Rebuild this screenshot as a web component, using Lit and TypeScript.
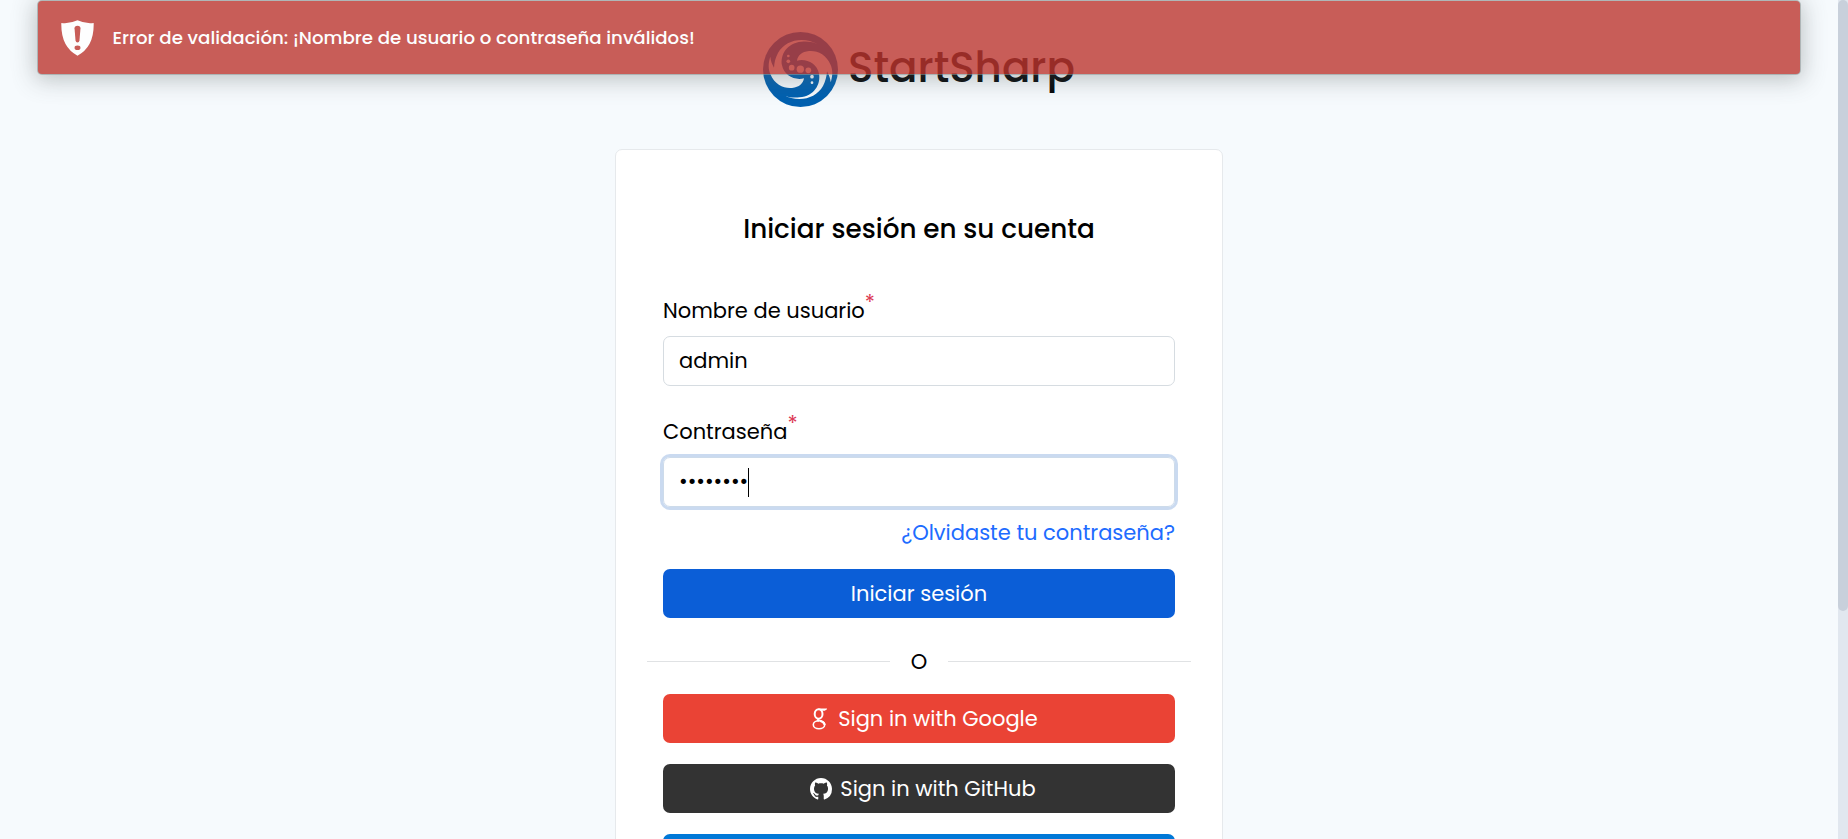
import { LitElement, html, css, svg } from "lit";
import { customElement } from "lit/decorators.js";

const swirl = "M168,49 C122,24 70,36 48,75 C40,90 37,104 36,119 C30,108 26,98 25,86 C18,107 19,124 25,138 C38,170 65,182 90,180 C112,178 124,166 126,151 C98,158 66,143 60,112 C54,80 75,45 118,41 C140,39 155,42 168,49Z";

const dots = [
  [79, 84, 4], [79, 100, 5.5], [89, 119, 8.5], [115, 123.5, 11], [139, 127, 8.5], [150, 146, 5.5], [150, 164, 4],
];

@customElement("app-root")
export class AppRoot extends LitElement {
  static styles = css`
    :host {
      display: block;
      font-family: Poppins, Inter, sans-serif;
      font-size: 21px;
      line-height: 30px;
      color: #000;
    }
    * { box-sizing: border-box; }
    .page { display: flex; height: 839px; overflow: hidden; background: #f6fafd; position: relative; }
    main { flex: 1; display: flex; flex-direction: column; align-items: center; padding-top: 32px; }
    .scroll { width: 10px; background: #e1e7ef; }
    .thumb { height: 611px; border-radius: 5px; background: #c8d0db; }
    .brand { display: flex; height: 75px; margin-bottom: 42px; gap: 10px; }
    .brand svg { width: 75px; height: 75px; }
    .brand span { font-size: 42px; font-weight: 500; line-height: 71px; white-space: nowrap; color: #06080b; }
    .card {
      flex: none; width: 608px; height: 760px; padding: 59px 47px 0; background: #fff;
      border: 1px solid #e6e9ec; border-radius: 7px; display: flex; flex-direction: column;
    }
    h1 { margin: 0 0 48px; font-size: 26.25px; font-weight: 500; line-height: 39px; text-align: center; white-space: nowrap; }
    label { display: block; margin-bottom: 10px; white-space: nowrap; }
    sup { color: #dc3a55; font-size: 21px; line-height: 0; vertical-align: 8px; }
    .input { height: 50px; border: 1px solid #d6dce1; border-radius: 7px; padding: 0 15px; display: flex; align-items: center; }
    .user { margin-bottom: 31px; }
    .focus { height: 50px; border-color: #cddbea; box-shadow: 0 0 0 3px #cadaf0; }
    .caret { width: 1px; height: 29px; background: #000; }
    .forgot { align-self: flex-end; margin: 11px 0 21px; color: #206bff; white-space: nowrap; }
    .btn {
      height: 49px; flex: none; border-radius: 7px; color: #fff;
      display: flex; align-items: center; justify-content: center; white-space: nowrap;
    }
    .primary { background: #0b5ed7; }
    .or { display: flex; align-items: center; gap: 21px; margin: 28px -16px 18px; }
    .or i { flex: 1; height: 1px; background: #e0e2e4; }
    .or span { padding-top: 2px; line-height: 28px; }
    .google { background: #ea4335; margin-bottom: 21px; padding-left: 12px; }
    .google svg { width: 15px; height: 22px; margin-right: 11px; }
    .github { background: #333; margin-bottom: 21px; padding-left: 8px; }
    .github svg { width: 22px; height: 22px; margin-right: 8px; }
    .ms { background: #0078d7; }
    .toast {
      position: absolute; left: 38px; top: 1px; width: 1762px; height: 73px; opacity: .8; border-radius: 4px;
      background: #bd362f; color: #fff; display: flex; align-items: center; padding-left: 23px; gap: 18.5px;
      box-shadow: 0 0 0 1px rgba(140,150,150,.75), 0 3px 22px 3px rgba(90,100,100,.45);
      font-size: 18.2px; font-weight: 500; white-space: nowrap;
    }
    .toast svg { width: 33px; height: 36px; }
  `;

  render() {
    return html`
      <div class="page">
        <main>
          <div class="brand">
            <svg viewBox="3 12 225 225">
              <circle cx="115.5" cy="124.5" r="112.5" fill="#0060b0"/>
              <g fill="#f6fafd">
                <path d=${swirl}/>
                <path d=${swirl} transform="rotate(180 115.5 124.5)"/>
                ${dots.map(([x, y, r]) => svg`<circle cx=${x} cy=${y} r=${r}/>`)}
              </g>
            </svg>
            <span>StartSharp</span>
          </div>
          <section class="card">
            <h1>Iniciar sesión en su cuenta</h1>
            <label>Nombre de usuario<sup>*</sup></label>
            <div class="input user">admin</div>
            <label>Contraseña<sup>*</sup></label>
            <div class="input focus"><span>••••••••</span><span class="caret"></span></div>
            <a class="forgot">¿Olvidaste tu contraseña?</a>
            <div class="btn primary">Iniciar sesión</div>
            <div class="or"><i></i><span>O</span><i></i></div>
            <div class="btn google">
              <svg viewBox="0 0 15 22" fill="none" stroke="#fff">
                <ellipse cx="6.6" cy="6" rx="3.9" ry="4.8" stroke-width="2"/>
                <path d="M6.5 1H14.2L12.6 2.1H9" stroke-width="1.2"/>
                <path d="M7.5 10.7C5.4 11.2 5.2 12.4 6.8 13.3" stroke-width="1.8"/>
                <ellipse cx="7" cy="16.8" rx="5.7" ry="4" stroke-width="1.6"/>
                <path d="M8 12.8C10.5 13.6 12.4 14.8 12.6 17" stroke-width="2.2"/>
              </svg>
              Sign in with Google
            </div>
            <div class="btn github">
              <svg viewBox="0 0 16 16" fill="#fff"><path d="M8 0C3.58 0 0 3.58 0 8c0 3.54 2.29 6.53 5.47 7.59.4.07.55-.17.55-.38 0-.19-.01-.82-.01-1.49-2.01.37-2.53-.49-2.69-.94-.09-.23-.48-.94-.82-1.13-.28-.15-.68-.52-.01-.53.63-.01 1.08.58 1.23.82.72 1.21 1.87.87 2.33.66.07-.52.28-.87.51-1.07-1.78-.2-3.64-.89-3.64-3.95 0-.87.31-1.59.82-2.15-.08-.2-.36-1.02.08-2.12 0 0 .67-.21 2.2.82.64-.18 1.32-.27 2-.27s1.36.09 2 .27c1.53-1.04 2.2-.82 2.2-.82.44 1.1.16 1.92.08 2.12.51.56.82 1.27.82 2.15 0 3.07-1.87 3.75-3.65 3.95.29.25.54.73.54 1.48 0 1.07-.01 1.93-.01 2.2 0 .21.15.46.55.38A8.01 8.01 0 0 0 16 8c0-4.42-3.58-8-8-8z"/></svg>
              Sign in with GitHub
            </div>
            <div class="btn ms"></div>
          </section>
        </main>
        <div class="scroll"><div class="thumb"></div></div>
        <div class="toast">
          <svg viewBox="33 30 100 107">
            <path fill="#fff" d="M83,30 Q60,41 34,38 Q32,110 83,137 Q134,110 132,38 Q106,41 83,30Z"/>
            <path fill="#bd362f" d="M74,54 Q74,46 83,46 Q92,46 92,54 L89,91 Q88,97 83,97 Q78,97 77,91Z"/>
            <ellipse cx="83" cy="113" rx="9" ry="7" fill="#bd362f"/>
          </svg>
          <span>Error de validación: ¡Nombre de usuario o contraseña inválidos!</span>
        </div>
      </div>`;
  }
}
